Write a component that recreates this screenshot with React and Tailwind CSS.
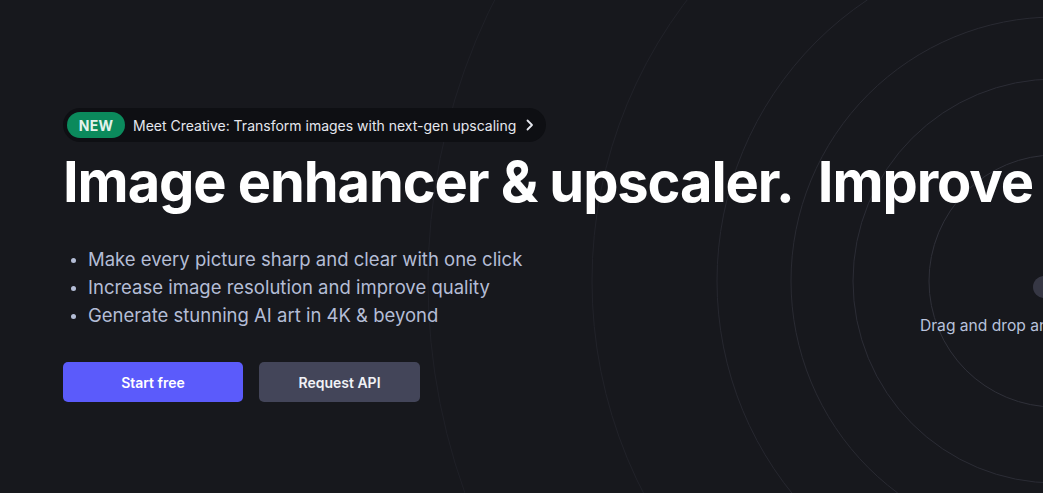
import React from 'react';

const rings = [
  { r: 126, stroke: '#2f3039' },
  { r: 202, stroke: '#2b2c35' },
  { r: 264, stroke: '#292a32' },
  { r: 338, stroke: '#26272f' },
  { r: 463, stroke: '#212229' },
  { r: 627, stroke: '#1f2027' },
];

const bullets = [
  'Make every picture sharp and clear with one click',
  'Increase image resolution and improve quality',
  'Generate stunning AI art in 4K & beyond',
];

function Rings() {
  return (
    <svg className="absolute inset-0 pointer-events-none" width="1043" height="493">
      {rings.map((c) => (
        <circle key={c.r} cx="1055" cy="281" r={c.r} fill="none" stroke={c.stroke} strokeWidth="1" />
      ))}
    </svg>
  );
}

function Badge() {
  return (
    <div className="inline-flex items-center h-[34px] rounded-full bg-[#0e0f13] pl-[4px] pr-[12px]">
      <span className="flex items-center justify-center h-[26px] w-[58px] rounded-full bg-[#0b8a5c] text-[14px] font-bold text-[#e4f3ec] tracking-[0.2px]">
        NEW
      </span>
      <span className="ml-[8px] text-[14px] text-[#e5e7ee]">
        Meet Creative: Transform images with next-gen upscaling
      </span>
      <svg className="ml-[9px]" width="9" height="12" viewBox="0 0 9 12" fill="none">
        <path d="M2.5 1.5 7 6l-4.5 4.5" stroke="#e5e7ee" strokeWidth="1.8" strokeLinecap="round" strokeLinejoin="round" />
      </svg>
    </div>
  );
}

export default function App() {
  return (
    <div
      className="relative w-[1043px] h-[493px] overflow-hidden bg-[#17181d]"
      style={{ fontFamily: 'Inter, "Liberation Sans", sans-serif' }}
    >
      <Rings />

      {/* upload drop zone, centred in the rings */}
      <div className="absolute left-[920px] top-[276px] flex flex-col items-start">
        <div className="ml-[113px] w-[22px] h-[22px] rounded-full bg-[#363744]" />
        <p className="mt-[16px] whitespace-nowrap text-[15.6px] text-[#b8c2dc]">
          Drag and drop an image or browse
        </p>
      </div>

      <div className="relative flex flex-col pl-[63px] pt-[108px]">
        <div>
          <Badge />
        </div>

        <h1 className="mt-[6px] whitespace-nowrap text-[56px] leading-[68px] font-bold tracking-[-1.1px] text-white">
          Image enhancer &amp; upscaler.&nbsp;&nbsp;Improve image quality
        </h1>

        <ul className="mt-[30px] flex flex-col">
          {bullets.map((b) => (
            <li key={b} className="flex items-center h-[28px] text-[18.5px] text-[#b4bdd6]">
              <span className="ml-[8px] mr-[12px] w-[5px] h-[5px] rounded-full bg-[#b4bdd6]" />
              {b}
            </li>
          ))}
        </ul>

        <div className="mt-[32px] flex gap-[16px]">
          <button className="w-[180px] h-[40px] rounded-[5px] bg-[#5b5bfb] text-[14px] font-semibold text-white">
            Start free
          </button>
          <button className="w-[161px] h-[40px] rounded-[5px] bg-[#434559] text-[14px] font-semibold text-[#f1f2f6]">
            Request API
          </button>
        </div>
      </div>
    </div>
  );
}
